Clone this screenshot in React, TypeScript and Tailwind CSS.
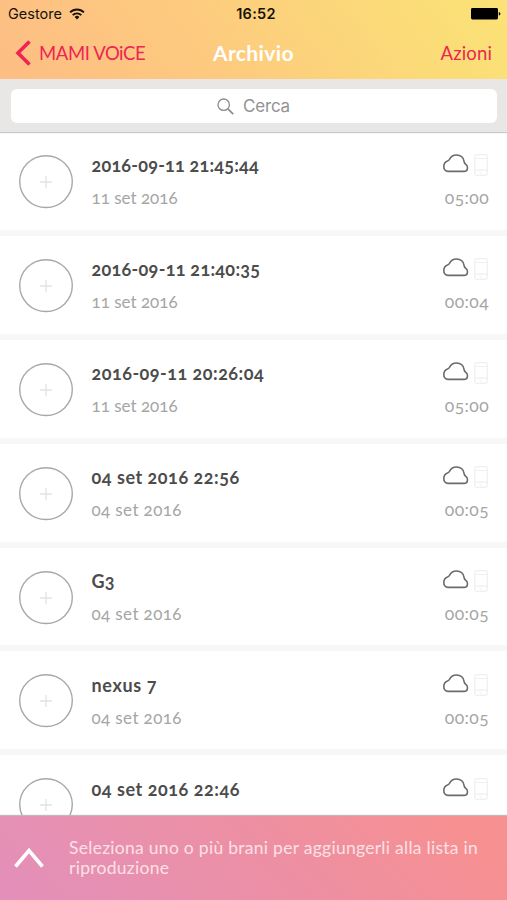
import { clsx } from 'clsx';

interface Recording {
  title: string;
  titleStyle: string;
  date?: string;
  dateStyle?: string;
  duration?: string;
}

const septemberEleventh = { date: '11 set 2016', dateStyle: 'tracking-[0px]' };
const septemberFourth = { date: '04 set 2016', dateStyle: 'tracking-[0.38px]' };

const recordings: Recording[] = [
  { title: '2016-09-11 21:45:44', titleStyle: 'tracking-[0.23px]', ...septemberEleventh, duration: '05:00' },
  { title: '2016-09-11 21:40:35', titleStyle: 'tracking-[0.3px]', ...septemberEleventh, duration: '00:04' },
  { title: '2016-09-11 20:26:04', titleStyle: 'tracking-[0.5px]', ...septemberEleventh, duration: '05:00' },
  { title: '04 set 2016 22:56', titleStyle: 'tracking-[0.54px]', ...septemberFourth, duration: '00:05' },
  { title: 'G3', titleStyle: 'tracking-[0.3px]', ...septemberFourth, duration: '00:05' },
  { title: 'nexus 7', titleStyle: 'tracking-[0.65px]', ...septemberFourth, duration: '00:05' },
  { title: '04 set 2016 22:46', titleStyle: 'tracking-[0.56px]' },
];

const WifiIcon = () => (
  <svg width="16" height="12" viewBox="0 0 16 12" fill="none" stroke="#16120a" strokeWidth="1.9">
    <path d="M1.1 4.4a9.8 9.8 0 0 1 13.8 0" />
    <path d="M3.7 7.1a6.1 6.1 0 0 1 8.6 0" />
    <path d="M8 11.4 5.6 9a3.4 3.4 0 0 1 4.8 0Z" fill="#16120a" stroke="none" />
  </svg>
);

const BatteryIcon = () => (
  <svg width="30" height="12" viewBox="0 0 30 12" fill="#000">
    <rect width="27" height="11.4" rx="1.4" />
    <path d="M27.8 4v3.6c1-.3 1.6-.9 1.6-1.8s-.6-1.5-1.6-1.8Z" />
  </svg>
);

const CloudIcon = () => (
  <svg width="26" height="19" viewBox="0 0 26 19" fill="none" stroke="#6b6b6b" strokeWidth="1.6">
    <path d="M5 17.4C2.500 17.400.800 15.400.800 12.700.800 9.600 2.200 7.600 4.500 6.900 5.800 6.500 6.100 6.200 6.700 5 8.200 2.200 10.300 1 13.300 1c4.400 0 7.400 2.800 7.900 6.800.2 1.200.5 1.700 1.400 2.400 1.200.9 1.900 2.200 1.900 3.500 0 2.200-1.500 3.700-3.700 3.700Z" />
  </svg>
);

const PhoneIcon = () => (
  <svg width="14" height="22" viewBox="0 0 14 22" fill="none" stroke="#f0f0f0" strokeWidth="1.2">
    <rect x=".7" y=".7" width="12.6" height="20.6" rx="2" />
    <path d="M1 4.5h12M1 16.2h12M5.800 19h2.400" />
  </svg>
);

const AddButton = () => (
  <svg width="54" height="54" viewBox="0 0 54 54" fill="none">
    <ellipse cx="27" cy="26.600" rx="26.300" ry="25.900" stroke="#a8a8a8" strokeWidth="1.4" />
    <path d="M27 21v12M21 27h12" stroke="#e2e2e2" strokeWidth="1.3" />
  </svg>
);

const StatusBar = () => (
  <div className="grid h-7 grid-cols-3 items-center pl-2 pr-[6px] font-['Inter'] text-[14.5px] text-[#16120a]">
    <div className="flex items-center gap-[7px]">
      <span>Gestore</span>
      <WifiIcon />
    </div>
    <div className="pl-[3px] text-center font-semibold tracking-[0.3px]">16:52</div>
    <div className="flex justify-end">
      <BatteryIcon />
    </div>
  </div>
);

const NavBar = () => (
  <div className="grid h-[51px] grid-cols-3 items-center px-[15px] text-[18.5px] text-[#ee2453]">
    <div className="flex items-center gap-2">
      <svg className="-mt-[2px]" width="16" height="26" viewBox="0 0 16 26" fill="none" stroke="#ee2453" strokeWidth="3.6">
        <path d="M14.5 1.500 3 13l11.500 11.500" />
      </svg>
      <span className="tracking-[-0.4px] whitespace-nowrap">MAMI VOiCE</span>
    </div>
    <h1 className="-mt-[2px] text-center text-[21px] font-bold tracking-[0.4px] text-white">Archivio</h1>
    <span className="text-right tracking-[0.15px]">Azioni</span>
  </div>
);

const SearchBar = () => (
  <div className="relative h-[53px] shrink-0 bg-[#e8e7e6] px-[10.5px] pt-[10px] shadow-[0_1px_1px_#c9c9c7]">
    <div className="flex h-[34px] items-center justify-center gap-[9px] rounded-[6px] bg-white font-['Inter'] text-[17px] text-[#929292]">
      <svg width="17" height="17" viewBox="0 0 17 17" fill="none" stroke="#8b8b8b" strokeWidth="1.3">
        <circle cx="6.7" cy="6.7" r="5.7" />
        <path d="m10.9 10.9 5.300 5.300" strokeWidth="1.7" />
      </svg>
      <span className="pt-px tracking-[-0.2px]">Cerca</span>
    </div>
  </div>
);

const RecordingRow = ({ recording }: { recording: Recording }) => (
  <li className="flex h-[103.9px] shrink-0 border-b-[6px] border-[#f7f7f7] px-[19px] pt-[23px]">
    <AddButton />

    <div className="-mt-[0.6px] ml-[18.5px] flex-1 whitespace-nowrap">
      <div className={clsx('text-[18px] leading-[22px] font-bold text-[#4c4c4c]', recording.titleStyle)}>
        {recording.title}
      </div>
      {recording.date && (
        <div className={clsx('mt-[11px] text-[17px] leading-[22px] text-[#a5a5a5]', recording.dateStyle)}>
          {recording.date}
        </div>
      )}
    </div>

    <div className="-mt-[0.6px] flex flex-col items-end">
      <div className="flex h-[22px] items-start gap-[5px]">
        <CloudIcon />
        <PhoneIcon />
      </div>
      {recording.duration && (
        <span className="-mr-px mt-[11px] text-[17.5px] leading-[22px] tracking-[0.4px] text-[#a5a5a5]">
          {recording.duration}
        </span>
      )}
    </div>
  </li>
);

const SelectionBar = () => (
  <footer className="relative flex h-[84px] shrink-0 items-start bg-[linear-gradient(45deg,#e28fba_0%,#e890ae_30%,#ef8f9f_62%,#f79090_92%)] pl-[14px] pt-[22px] shadow-[0_-1px_1px_#c4b9ba]">
    <svg className="mt-[9px]" width="30" height="22" viewBox="0 0 30 22" fill="none" stroke="#fff" strokeWidth="3.6">
      <path d="M1.5 19.500 15 3.500l13.500 16" />
    </svg>
    <p className="ml-[25px] text-[17.5px] leading-5 tracking-[0.28px] whitespace-nowrap text-[#fde0e5]">
      <span className="block">Seleziona uno o più brani per aggiungerli alla lista in</span>
      <span className="block">riproduzione</span>
    </p>
  </footer>
);

export default function App() {
  return (
    <div className="flex h-[900px] w-[507px] flex-col overflow-hidden bg-white font-['Lato','Open_Sans',sans-serif] oldstyle-nums">
      <header className="h-[79px] shrink-0 bg-[linear-gradient(55deg,#fdbd84_0%,#fdca7f_40%,#fbdb78_78%,#fbe276_100%)]">
        <StatusBar />
        <NavBar />
      </header>
      <SearchBar />
      <ul className="flex min-h-0 flex-1 flex-col overflow-hidden">
        {recordings.map((recording) => (
          <RecordingRow key={recording.title} recording={recording} />
        ))}
      </ul>
      <SelectionBar />
    </div>
  );
}
